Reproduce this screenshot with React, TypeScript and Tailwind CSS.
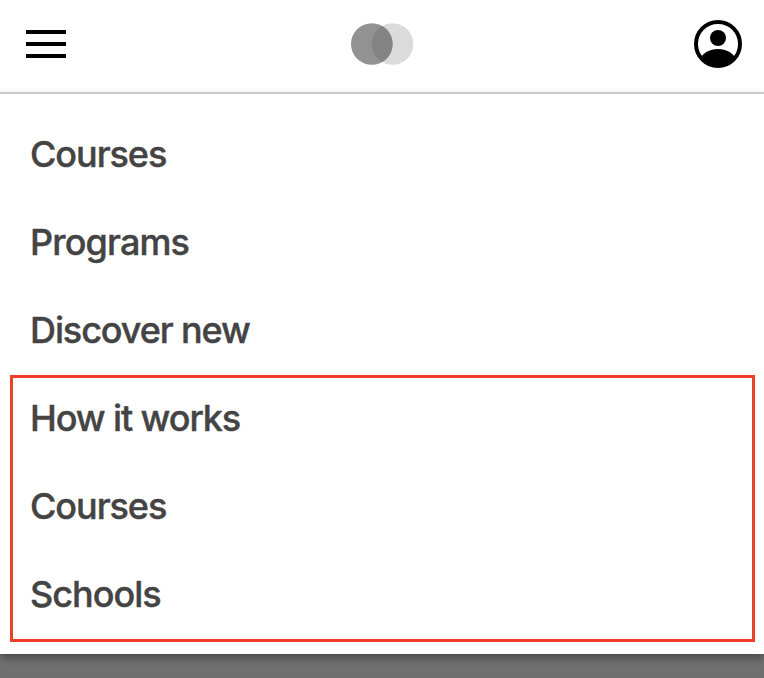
const items = [
  { label: 'Courses', tracking: 'tracking-[-1.05px]' },
  { label: 'Programs', tracking: 'tracking-[-0.85px]' },
  { label: 'Discover new', tracking: 'tracking-[-1.1px]' },
];
const more = [
  { label: 'How it works', tracking: 'tracking-[-1.1px]' },
  { label: 'Courses', tracking: 'tracking-[-1.05px]' },
  { label: 'Schools', tracking: 'tracking-[-1px]' },
];

function Item({ label, tracking }: { label: string; tracking: string }) {
  return (
    <li className="flex h-[88px] items-center">
      <a href="#" className={`whitespace-nowrap ${tracking}`}>{label}</a>
    </li>
  );
}

export default function App() {
  return (
    <div className="flex h-[678px] w-[764px] flex-col overflow-hidden bg-[#707070] font-['Inter',sans-serif]">
      <div className="flex h-[654px] shrink-0 flex-col bg-white shadow-[0_4px_8px_rgba(0,0,0,0.35)]">
        <header className="flex h-[94px] shrink-0 items-start justify-between border-b-2 border-[#cbcbcb] bg-linear-to-b from-white from-94% to-[#f7f7f7] pl-[26px] pr-[22px] pt-5">
          <button aria-label="Menu" className="mt-[10px] flex w-12 flex-col gap-2">
            <span className="h-1 w-10 bg-black" />
            <span className="h-1 w-10 bg-black" />
            <span className="h-1 w-10 bg-black" />
          </button>
          <svg className="-ml-[3px] mt-[3px]" width="64" height="42" viewBox="0 0 64 42">
            <circle cx="41.5" cy="21" r="20.8" fill="#dbdbdb" />
            <circle cx="20.8" cy="21" r="20.8" fill="#929292" />
            <path d="M31.15 3a20.8 20.8 0 0 1 0 36a20.8 20.8 0 0 1 0-36z" fill="#838383" />
          </svg>
          <svg width="48" height="48" viewBox="0 0 48 48">
            <defs><clipPath id="avatar"><circle cx="24" cy="24" r="22" /></clipPath></defs>
            <circle cx="24" cy="24" r="22" fill="white" stroke="black" strokeWidth="4" />
            <circle cx="24" cy="18" r="8" />
            <ellipse cx="24" cy="42" rx="18" ry="13" clipPath="url(#avatar)" />
          </svg>
        </header>
        <nav className="pt-4 text-[36px] font-medium leading-[44px] text-[#444] [-webkit-text-stroke:0.4px_#444]">
          <ul className="mb-px pl-[30px]">{items.map((t) => <Item key={t.label} {...t} />)}</ul>
          <div className="ml-[10px] mr-[9px] h-[267px] border-[3px] border-[#ee4026] pl-[17px]">
            <ul className="-mt-1">{more.map((t) => <Item key={t.label} {...t} />)}</ul>
          </div>
        </nav>
      </div>
    </div>
  );
}
